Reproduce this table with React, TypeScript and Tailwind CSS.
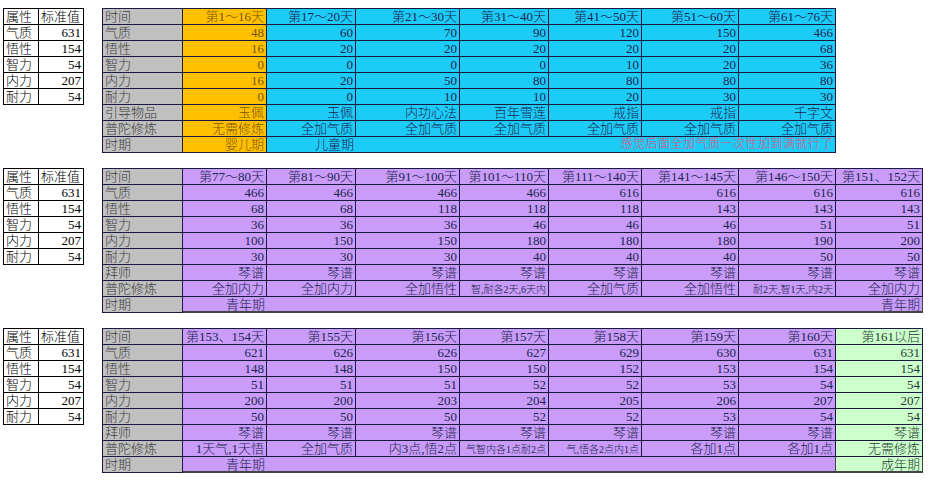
import React from 'react';

type Cell = string | { text: string; small?: boolean };

interface Block {
  bg: string;
  cols: string;
  heads: string[];
  rows: { label: string; cells: Cell[] }[];
  extraBg?: string;
  last: React.ReactNode;
}

const font = { fontFamily: '"Liberation Serif", "Noto Sans CJK SC", serif' };

const stats = [
  ['气质', '631'],
  ['悟性', '154'],
  ['智力', '54'],
  ['内力', '207'],
  ['耐力', '54'],
];

const StatTable: React.FC = () => (
  <div className="grid grid-cols-[35px_45px] border-t border-l border-black text-[13px] leading-[15px] text-black">
    <div className="h-4 border-r border-b border-black px-[2px]">属性</div>
    <div className="h-4 border-r border-b border-black px-[2px]">标准值</div>
    {stats.map(([k, v]) => (
      <React.Fragment key={k}>
        <div className="h-4 border-r border-b border-black px-[2px]">{k}</div>
        <div className="h-4 border-r border-b border-black px-[2px] text-right">{v}</div>
      </React.Fragment>
    ))}
  </div>
);

const Label: React.FC<{ children: React.ReactNode }> = ({ children }) => (
  <div className="h-4 border-r border-b border-[#1a1a40] bg-[#c0c0c0] px-[2px] text-[#3a3a3a]">{children}</div>
);

const DataCell: React.FC<{ cell: Cell; bg: string }> = ({ cell, bg }) => {
  const c = typeof cell === 'string' ? { text: cell } : cell;
  return (
    <div className={`h-4 overflow-hidden whitespace-nowrap border-r border-b border-[#1a1a40] px-[2px] text-right ${bg}`}>
      {c.small ? <span className="text-[10px]">{c.text}</span> : c.text}
    </div>
  );
};

// greenFrom: index of the first column painted green (block 3 only)
const MainTable: React.FC<{ block: Block; greenAt?: number; green?: string }> = ({ block, greenAt, green }) => {
  const bgFor = (i: number) => {
    if (i === 0 && block.extraBg) return block.extraBg;
    if (greenAt !== undefined && i === greenAt && green) return green;
    return block.bg;
  };
  return (
    <div className={`grid ${block.cols} border-t border-l border-[#1a1a40] text-[13px] font-light leading-[15px] text-[#1c2450]`}>
      <Label>时间</Label>
      {block.heads.map((h, i) => (
        <DataCell key={h} cell={h} bg={bgFor(i)} />
      ))}
      {block.rows.map((r) => (
        <React.Fragment key={r.label}>
          <Label>{r.label}</Label>
          {r.cells.map((c, i) => (
            <DataCell key={i} cell={c} bg={bgFor(i)} />
          ))}
        </React.Fragment>
      ))}
      <Label>时期</Label>
      {block.last}
    </div>
  );
};

const qin = Array(8).fill('琴谱');

export default function App() {
  const blue = 'bg-[#1ccbf6]';
  const purple = 'bg-[#c99cf9]';
  const green = 'bg-[#ccffcc] text-[#263a2c]';
  const yellow = 'bg-[#ffc000] text-[#7a5500]';

  const b1: Block = {
    bg: blue,
    extraBg: yellow,
    cols: 'grid-cols-[80px_84px_89px_104px_89px_93px_97px_97px] w-[734px]',
    heads: ['第1～16天', '第17～20天', '第21～30天', '第31～40天', '第41～50天', '第51～60天', '第61～76天'],
    rows: [
      { label: '气质', cells: ['48', '60', '70', '90', '120', '150', '466'] },
      { label: '悟性', cells: ['16', '20', '20', '20', '20', '20', '68'] },
      { label: '智力', cells: ['0', '0', '0', '0', '10', '20', '36'] },
      { label: '内力', cells: ['16', '20', '50', '80', '80', '80', '80'] },
      { label: '耐力', cells: ['0', '0', '10', '10', '20', '30', '30'] },
      { label: '引导物品', cells: ['玉佩', '玉佩', '内功心法', '百年雪莲', '戒指', '戒指', '千字文'] },
      { label: '普陀修炼', cells: ['无需修炼', '全加气质', '全加气质', '全加气质', '全加气质', '全加气质', '全加气质'] },
    ],
    last: (
      <>
        <div className={`h-4 border-r border-b border-[#1a1a40] px-[2px] text-right ${yellow}`}>婴儿期</div>
        <div className={`col-span-6 flex h-4 justify-between border-r border-b border-[#1a1a40] ${blue}`}>
          <div className="w-[89px] px-[2px] text-right">儿童期</div>
          <div className="px-[2px] text-[12px] tracking-[0.5px] text-[#e4507a]">感觉后面全加气质一次性加到满就行了</div>
        </div>
      </>
    ),
  };

  const b2: Block = {
    bg: purple,
    cols: 'grid-cols-[80px_84px_89px_104px_89px_93px_97px_97px_87px] w-[821px]',
    heads: ['第77～80天', '第81～90天', '第91～100天', '第101～110天', '第111～140天', '第141～145天', '第146～150天', '第151、152天'],
    rows: [
      { label: '气质', cells: ['466', '466', '466', '466', '616', '616', '616', '616'] },
      { label: '悟性', cells: ['68', '68', '118', '118', '118', '143', '143', '143'] },
      { label: '智力', cells: ['36', '36', '36', '46', '46', '46', '51', '51'] },
      { label: '内力', cells: ['100', '150', '150', '180', '180', '180', '190', '200'] },
      { label: '耐力', cells: ['30', '30', '30', '40', '40', '40', '50', '50'] },
      { label: '拜师', cells: qin },
      {
        label: '普陀修炼',
        cells: ['全加内力', '全加内力', '全加悟性', { text: '智,耐各2天,6天内', small: true }, '全加气质', '全加悟性', { text: '耐2天,智1天,内2天', small: true }, '全加内力'],
      },
    ],
    last: (
      <div className={`col-span-8 flex h-4 justify-between border-r border-b-2 border-[#444] ${purple}`}>
        <div className="w-[84px] px-[2px] text-right">青年期</div>
        <div className="px-[2px] text-right">青年期</div>
      </div>
    ),
  };

  const b3: Block = {
    bg: purple,
    cols: 'grid-cols-[80px_84px_89px_104px_89px_93px_97px_97px_87px] w-[821px]',
    heads: ['第153、154天', '第155天', '第156天', '第157天', '第158天', '第159天', '第160天', '第161以后'],
    rows: [
      { label: '气质', cells: ['621', '626', '626', '627', '629', '630', '631', '631'] },
      { label: '悟性', cells: ['148', '148', '150', '150', '152', '153', '154', '154'] },
      { label: '智力', cells: ['51', '51', '51', '52', '52', '53', '54', '54'] },
      { label: '内力', cells: ['200', '200', '203', '204', '205', '206', '207', '207'] },
      { label: '耐力', cells: ['50', '50', '50', '52', '52', '53', '54', '54'] },
      { label: '拜师', cells: qin },
      {
        label: '普陀修炼',
        cells: ['1天气,1天悟', '全加气质', '内3点,悟2点', { text: '气智内各1点耐2点', small: true }, { text: '气,悟各2点内1点', small: true }, '各加1点', '各加1点', '无需修炼'],
      },
    ],
    last: (
      <>
        <div className={`col-span-7 flex h-4 border-r border-b-2 border-[#444] ${purple}`}>
          <div className="w-[84px] px-[2px] text-right">青年期</div>
        </div>
        <div className={`h-4 border-r border-b-2 border-[#444] px-[2px] text-right ${green}`}>成年期</div>
      </>
    ),
  };

  return (
    <div className="min-h-[500px] w-[929px] bg-white pt-2 pl-[3px] font-light" style={font}>
      <div className="flex flex-col gap-[15px]">
        {[b1, b2, b3].map((b, i) => (
          <div key={i} className="flex items-start">
            <StatTable />
            <div className="ml-[18px]">
              <MainTable block={b} greenAt={i === 2 ? 7 : undefined} green={green} />
            </div>
          </div>
        ))}
      </div>
    </div>
  );
}
